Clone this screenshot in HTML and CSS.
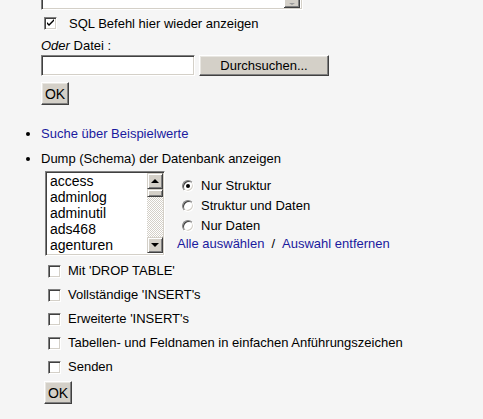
FILE: index.html
```html
<!DOCTYPE html>
<html lang="de">
<head>
  <meta charset="UTF-8" />
  <title>SQL</title>
  <link rel="stylesheet" href="styles.css">
</head>
<body>
  <div class="page">
    <div class="sql-area">
      <div class="sql-scroll"><span class="arrow-down"></span></div>
    </div>

    <label class="check-row top-check">
      <span class="cb">
        <svg width="11" height="11" viewBox="0 0 11 11"><path d="M2 4v2l2 2l5-5v-2l-5 5z" fill="#000"/></svg>
      </span>
      SQL Befehl hier wieder anzeigen
    </label>

    <div class="file-label"><i>Oder</i> Datei :</div>
    <div class="file-row">
      <input class="file-text" type="text">
      <button class="btn browse">Durchsuchen...</button>
    </div>
    <button class="btn ok">OK</button>

    <ul class="actions">
      <li><a href="#">Suche über Beispielwerte</a></li>
      <li>
        Dump (Schema) der Datenbank anzeigen
        <div class="dump">
          <div class="listbox">
            <div class="items">
              <div>access</div>
              <div>adminlog</div>
              <div>adminutil</div>
              <div>ads468</div>
              <div>agenturen</div>
            </div>
            <div class="vscroll">
              <span class="sbtn"><span class="arrow-up"></span></span>
              <span class="thumb"></span>
              <span class="track"></span>
              <span class="sbtn"><span class="arrow-down"></span></span>
            </div>
          </div>
          <div class="modes">
            <label class="radio-row"><span class="rb checked"></span>Nur Struktur</label>
            <label class="radio-row"><span class="rb"></span>Struktur und Daten</label>
            <label class="radio-row"><span class="rb"></span>Nur Daten</label>
            <div class="select-links">
              <a href="#">Alle auswählen</a>
              <span class="sep">/</span>
              <a href="#">Auswahl entfernen</a>
            </div>
          </div>
        </div>

        <div class="options">
          <label class="opt"><span class="cb"></span>Mit 'DROP TABLE'</label>
          <label class="opt"><span class="cb"></span>Vollständige 'INSERT's</label>
          <label class="opt"><span class="cb"></span>Erweiterte 'INSERT's</label>
          <label class="opt"><span class="cb"></span>Tabellen- und Feldnamen in einfachen Anführungszeichen</label>
          <label class="opt"><span class="cb"></span>Senden</label>
        </div>
        <button class="btn ok ok-dump">OK</button>
      </li>
    </ul>
  </div>
</body>
</html>
```

FILE: styles.css
```css
* {
  margin: 0;
  padding: 0;
  box-sizing: border-box;
}
body {
  background: #f5f5f5;
  color: #000;
  font-family: 'Liberation Sans', Arial, sans-serif;
  font-size: 13px;
  overflow: hidden;
}
a {
  color: #1a1a9e;
  text-decoration: none;
}
.page {
  padding-left: 41px;
  display: flex;
  flex-direction: column;
  align-items: flex-start;
}

/* textarea cut off at the top */
.sql-area {
  width: 262px;
  height: 10px;
  background: #fff;
  border-left: 1px solid #808080;
  border-right: 1px solid #fff;
  border-bottom: 1px solid #fff;
  box-shadow: inset 1px 0 #404040, inset -1px -1px #d4d0c8;
  display: flex;
  justify-content: flex-end;
  padding-right: 2px;
}
.sql-scroll {
  width: 16px;
  height: 8px;
  background: #d4d0c8;
  border-right: 1px solid #404040;
  border-bottom: 1px solid #404040;
  box-shadow: inset 1px 0 #fff, inset -1px -1px #808080;
  display: flex;
  justify-content: center;
  align-items: flex-end;
  padding-bottom: 2px;
}
.sql-scroll .arrow-down {
  border-width: 2px 3px 0;
  border-color: #9a9a9a transparent transparent;
}

/* checkboxes */
.cb {
  width: 13px;
  height: 13px;
  flex: none;
  background: #fff;
  border: 1px solid;
  border-color: #808080 #fff #fff #808080;
  box-shadow: inset 1px 1px #404040, inset -1px -1px #d4d0c8;
  display: flex;
  align-items: center;
  justify-content: center;
}
.check-row {
  display: flex;
  align-items: center;
  height: 18px;
}
.top-check {
  margin-top: 4px;
  margin-left: 3px;
  gap: 12px;
}
.file-label {
  margin-top: 6px;
  height: 16px;
  line-height: 16px;
}
.file-row {
  margin-top: 1px;
  display: flex;
  gap: 4px;
}
.file-text {
  width: 154px;
  height: 21px;
  background: #fff;
  border: 1px solid;
  border-color: #808080 #fff #fff #808080;
  box-shadow: inset 1px 1px #404040, inset -1px -1px #d4d0c8;
  outline: none;
}

/* classic buttons */
.btn {
  font-family: 'Liberation Sans', Arial, sans-serif;
  font-size: 13px;
  color: #000;
  background: #d4d0c8;
  border: 1px solid;
  border-color: #fff #404040 #404040 #fff;
  box-shadow: inset -1px -1px #808080, inset 1px 1px #e8e6e1;
}
.browse {
  width: 130px;
  height: 21px;
}
.ok {
  margin-top: 6px;
  width: 28px;
  height: 23px;
  font-size: 14px;
  padding: 0;
}

/* list */
.actions {
  margin-top: 21px;
  list-style: disc;
  display: flex;
  flex-direction: column;
  gap: 9px;
}
.actions li {
  line-height: 16px;
}
.dump {
  margin-top: 4px;
  margin-left: 4px;
  display: flex;
  align-items: center;
  gap: 12px;
}
.listbox {
  width: 120px;
  height: 85px;
  background: #fff;
  border: 1px solid;
  border-color: #808080 #fff #fff #808080;
  box-shadow: inset 1px 1px #404040, inset -1px -1px #d4d0c8;
  padding: 1px 1px 2px 2px;
  display: flex;
}
.items {
  flex: 1;
  padding-left: 2px;
}
.items div {
  height: 16px;
  line-height: 16px;
  font-size: 14px;
}
.vscroll {
  width: 16px;
  display: flex;
  flex-direction: column;
}
.sbtn, .thumb {
  height: 16px;
  flex: none;
  background: #d4d0c8;
  border: 1px solid;
  border-color: #d4d0c8 #404040 #404040 #d4d0c8;
  box-shadow: inset 1px 1px #fff, inset -1px -1px #808080;
  display: flex;
  align-items: center;
  justify-content: center;
}
.thumb {
  height: 8px;
}
.track {
  flex: 1;
  background: repeating-conic-gradient(#fff 0 25%, #d4d0c8 0 50%) 0 0 / 2px 2px;
}
.arrow-up, .arrow-down {
  width: 0;
  height: 0;
  border-style: solid;
}
.arrow-up {
  border-width: 0 4px 4px;
  border-color: transparent transparent #000;
}
.arrow-down {
  border-width: 4px 4px 0;
  border-color: #000 transparent transparent;
}

/* radio column */
.modes {
  display: flex;
  flex-direction: column;
}
.radio-row {
  height: 20px;
  display: flex;
  align-items: center;
  gap: 7px;
  padding-left: 5px;
}
.rb {
  width: 12px;
  height: 12px;
  border-radius: 50%;
  background: #fff;
  border: 1px solid;
  border-color: #808080 #fff #fff #808080;
  box-shadow: inset 1px 1px #404040, inset -1px -1px #d4d0c8;
  display: flex;
  align-items: center;
  justify-content: center;
}
.rb.checked::after {
  content: '';
  width: 4px;
  height: 4px;
  border-radius: 50%;
  background: #000;
}
.select-links {
  height: 16px;
  display: flex;
  align-items: center;
  gap: 7px;
}

/* dump options */
.options {
  margin-top: 3px;
  margin-left: 7px;
  display: flex;
  flex-direction: column;
}
.opt {
  height: 24px;
  display: flex;
  align-items: center;
  gap: 7px;
}
.ok-dump {
  margin-top: 2px;
  margin-left: 3px;
}
```
